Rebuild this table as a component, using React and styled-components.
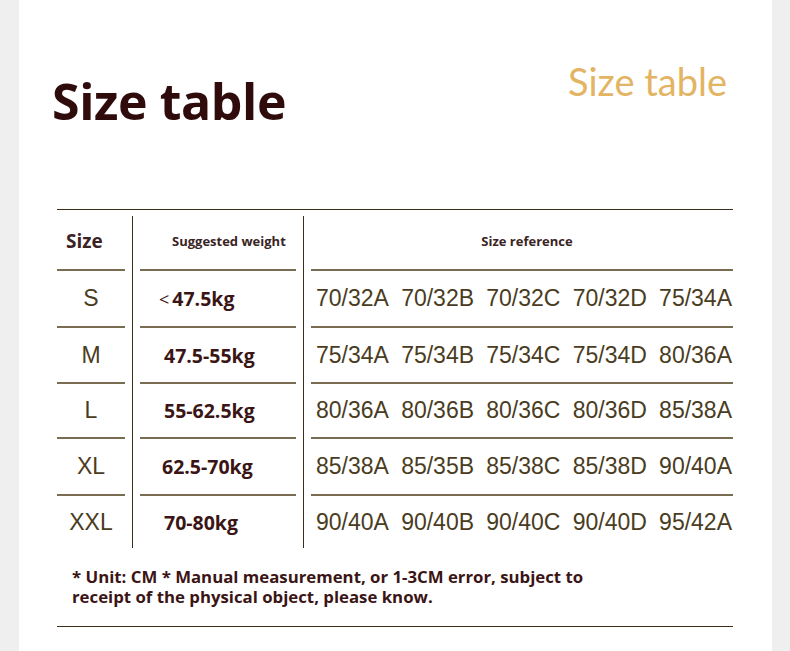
import styled, { createGlobalStyle } from "styled-components"

const GlobalStyle = createGlobalStyle`
  html, body {
    margin: 0;
    padding: 0;
    background: #efefef;
  }
  * { box-sizing: border-box; }
`

const Page = styled.div`
  width: 753px;
  height: 651px;
  margin-left: 19px;
  background: #ffffff;
  padding-top: 62px;
`

const Header = styled.div`
  display: flex;
  justify-content: space-between;
  align-items: flex-start;
  padding: 0 45px 0 33px;
`

const Title = styled.h1`
  margin: 14px 0 0 0;
  font-family: "Open Sans", "Noto Sans", sans-serif;
  font-weight: 700;
  font-size: 50px;
  line-height: 1;
  color: #2f0b0b;
  letter-spacing: -0.4px;
`

const SubTitle = styled.div`
  font-family: Lato, "Open Sans", sans-serif;
  font-weight: 400;
  font-size: 38px;
  line-height: 1;
  color: #e3b463;
`

const Sheet = styled.div`
  margin: 83px 0 0 38px;
  width: 676px;
  border-top: 1px solid #3d2e1c;
  border-bottom: 1px solid #3d2e1c;
`

const Table = styled.div`
  display: flex;
`

const Column = styled.div`
  width: ${p => p.$width}px;
  margin: 6px 0 4px;
  border-right: ${p => (p.$divider ? "1px solid #3d2e1c" : "none")};
  display: flex;
  flex-direction: column;
`

const Cell = styled.div`
  height: ${p => p.$h}px;
  margin: ${p => p.$inset};
  border-bottom: ${p => (p.$last ? "none" : "2px solid #7a6c52")};
  display: flex;
  align-items: center;
  justify-content: ${p => p.$justify || "flex-start"};
  padding: ${p => p.$pad || "0"};
`

const HeadText = styled.span`
  font-family: "Open Sans", "Noto Sans", sans-serif;
  font-weight: 700;
  font-size: ${p => p.$size}px;
  color: #3a2424;
  margin-bottom: 4px;
`

const SizeText = styled.span`
  font-family: "Liberation Sans", Arial, sans-serif;
  font-size: 23px;
  color: #4a3c22;
`

const Weight = styled.span`
  font-family: "Open Sans", "Noto Sans", sans-serif;
  font-weight: 700;
  font-size: 19.5px;
  color: #3b1515;
  display: flex;
  align-items: center;
`

const Lt = styled.span`
  font-weight: 400;
  font-size: 18px;
  margin-right: 3px;
`

const RefRow = styled.div`
  width: 100%;
  display: flex;
  justify-content: space-between;
`

const Footer = styled.p`
  margin: 0;
  padding: 15px 0 20px 15px;
  max-width: 560px;
  font-family: "Open Sans", "Noto Sans", sans-serif;
  font-weight: 700;
  font-size: 16.8px;
  line-height: 19.5px;
  color: #3b1515;
`

const rows = [
  { size: "S", weight: "47.5kg", lt: true, refs: ["70/32A", "70/32B", "70/32C", "70/32D", "75/34A"], h: 57 },
  { size: "M", weight: "47.5-55kg", refs: ["75/34A", "75/34B", "75/34C", "75/34D", "80/36A"], h: 56 },
  { size: "L", weight: "55-62.5kg", refs: ["80/36A", "80/36B", "80/36C", "80/36D", "85/38A"], h: 55 },
  { size: "XL", weight: "62.5-70kg", pad: "0 0 0 22px", refs: ["85/38A", "85/35B", "85/38C", "85/38D", "90/40A"], h: 57 },
  { size: "XXL", weight: "70-80kg", refs: ["90/40A", "90/40B", "90/40C", "90/40D", "95/42A"], h: 52 },
]

const App = () => {
  return (
    <>
      <GlobalStyle />
      <Page>
        <Header>
          <Title>Size table</Title>
          <SubTitle>Size table</SubTitle>
        </Header>

        <Sheet>
          <Table>
            <Column $width={76} $divider>
              <Cell $h={55} $inset="0 7px 0 0" $pad="0 0 0 9px">
                <HeadText $size={19}>Size</HeadText>
              </Cell>
              {rows.map((r, i) => (
                <Cell key={r.size} $h={r.h} $inset="0 7px 0 0" $justify="center" $last={i === rows.length - 1}>
                  <SizeText>{r.size}</SizeText>
                </Cell>
              ))}
            </Column>

            <Column $width={171} $divider>
              <Cell $h={55} $inset="0 7px 0 7px" $pad="0 0 0 32px">
                <HeadText $size={13}>Suggested weight</HeadText>
              </Cell>
              {rows.map((r, i) => (
                <Cell
                  key={r.size}
                  $h={r.h}
                  $inset="0 7px 0 7px"
                  $pad={r.lt ? "0 0 0 19px" : r.pad || "0 0 0 24px"}
                  $last={i === rows.length - 1}
                >
                  <Weight>
                    {r.lt && <Lt>&lt;</Lt>}
                    {r.weight}
                  </Weight>
                </Cell>
              ))}
            </Column>

            <Column $width={429}>
              <Cell $h={55} $inset="0 0 0 7px" $justify="center" $pad="0 0 0 10px">
                <HeadText $size={13}>Size reference</HeadText>
              </Cell>
              {rows.map((r, i) => (
                <Cell key={r.size} $h={r.h} $inset="0 0 0 7px" $pad="0 1px 0 5px" $last={i === rows.length - 1}>
                  <RefRow>
                    {r.refs.map((ref, j) => (
                      <SizeText key={j}>{ref}</SizeText>
                    ))}
                  </RefRow>
                </Cell>
              ))}
            </Column>
          </Table>

          <Footer>
            * Unit: CM * Manual measurement, or 1-3CM error, subject to receipt of the physical object, please know.
          </Footer>
        </Sheet>
      </Page>
    </>
  )
}

export default App
